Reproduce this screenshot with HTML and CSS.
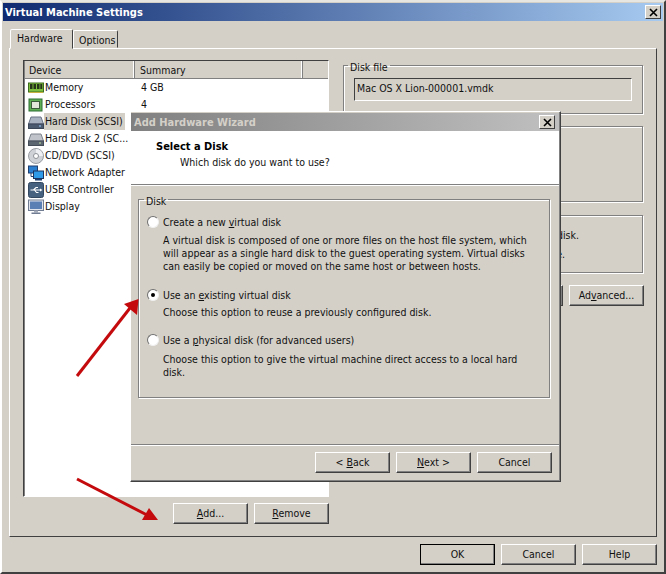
FILE: index.html
```html
<!DOCTYPE html>
<html lang="en">
<head>
<meta charset="utf-8">
<title>Virtual Machine Settings</title>
<link rel="stylesheet" href="styles.css">
</head>
<body>
<div class="window">
  <div class="titlebar main-title">
    <span>Virtual Machine Settings</span>
    <span class="close"><svg width="9" height="9" viewBox="0 0 9 9"><path d="M1 1L8 8M8 1L1 8" stroke="#000" stroke-width="1.6"/></svg></span>
  </div>
  <div class="tabs">
    <div class="tab active">Hardware</div>
    <div class="tab">Options</div>
  </div>
  <div class="panel">
    <div class="left">
      <div class="list">
        <div class="list-head">
          <div class="hcell dev">Device</div>
          <div class="hcell sum">Summary</div>
          <div class="hcell rest"></div>
        </div>
        <div class="row">
          <svg class="ico" viewBox="0 0 16 16"><rect x="0.5" y="3" width="15" height="9" fill="#7fbf3f" stroke="#3d6b1e"/><path d="M2 4h2.5v5H2zM5.5 4H8v5H5.5zM9 4h2.500v5H9zM12.300 4h2v5h-2z" fill="#26331a"/><path d="M1 12h14v1H1z" fill="#c8b040"/></svg>
          <span class="name">Memory</span><span class="val">4 GB</span>
        </div>
        <div class="row">
          <svg class="ico" viewBox="0 0 16 16"><rect x="1" y="2" width="13" height="12" fill="#5fae55" stroke="#2d6e33"/><rect x="3.500" y="4.500" width="8" height="7" fill="#e4e8dc" stroke="#3c5c3c"/></svg>
          <span class="name">Processors</span><span class="val">4</span>
        </div>
        <div class="row">
          <svg class="ico" viewBox="0 0 16 16"><path d="M3 3h10l2.500 7H.5z" fill="#a9b2c0" stroke="#6a7486"/><rect x="0.500" y="10" width="15" height="4.500" fill="#4c5a70" stroke="#3a4558"/><rect x="11" y="11.500" width="2" height="1" fill="#9fd0ff"/></svg>
          <span class="name selected">Hard Disk (SCSI)</span>
        </div>
        <div class="row">
          <svg class="ico" viewBox="0 0 16 16"><path d="M3 3h10l2.500 7H.5z" fill="#c0c4ca" stroke="#7c828c"/><rect x="0.500" y="10" width="15" height="4.500" fill="#5c6670" stroke="#454d58"/><rect x="11" y="11.500" width="2" height="1" fill="#bfe0a0"/></svg>
          <span class="name">Hard Disk 2 (SC...</span>
        </div>
        <div class="row">
          <svg class="ico" viewBox="0 0 16 16"><circle cx="8" cy="8" r="7.500" fill="#cfd2d6" stroke="#9a9da3"/><path d="M8 1a7 7 0 0 1 7 7H8z" fill="#eef0f3"/><circle cx="8" cy="8" r="2.500" fill="#fff" stroke="#8e9298"/></svg>
          <span class="name">CD/DVD (SCSI)</span>
        </div>
        <div class="row">
          <svg class="ico" viewBox="0 0 16 16"><rect x="0.500" y="1" width="9" height="7" fill="#2a7fd0" stroke="#1f3e70"/><path d="M3 8v3.500h3" fill="none" stroke="#1f3e70"/><rect x="5.500" y="6" width="10" height="7.500" fill="#2f9ae8" stroke="#1c3560"/><rect x="7" y="14" width="7" height="1.500" fill="#1f3e70"/></svg>
          <span class="name">Network Adapter</span>
        </div>
        <div class="row">
          <svg class="ico" viewBox="0 0 16 16"><rect x="0.500" y="0.500" width="15" height="15" rx="2" fill="#46617f" stroke="#33475f"/><path d="M2.500 8h10M5.500 8l2.500-2.500h2M6.500 8l2 2.500h2" fill="none" stroke="#fff" stroke-width="1.100"/><path d="M12 6.500l2.500 1.500-2.500 1.500z" fill="#fff"/></svg>
          <span class="name">USB Controller</span>
        </div>
        <div class="row">
          <svg class="ico" viewBox="0 0 16 16"><rect x="0.500" y="1" width="15" height="10.500" fill="#dfe4ec" stroke="#6f7c92"/><rect x="2" y="2.500" width="12" height="7.500" fill="#5a7fb5"/><path d="M6 11.500h4v2H6z" fill="#a6adba"/><path d="M3.500 13.500h9v1.500h-9z" fill="#6f7c92"/></svg>
          <span class="name">Display</span>
        </div>
      </div>
      <div class="btn-row list-btns">
        <div class="btn"><span><u>A</u>dd...</span></div>
        <div class="btn"><span><u>R</u>emove</span></div>
      </div>
    </div>
    <div class="right">
      <fieldset class="group file-group">
        <legend>Disk file</legend>
        <div class="input">Mac OS X Lion-000001.vmdk</div>
      </fieldset>
      <div class="group capacity"></div>
      <div class="group info">
        <p class="info-a">disk.</p>
        <p class="info-b">e.</p>
      </div>
      <div class="btn-row util-btns">
        <div class="btn"></div>
        <div class="btn"><span>Ad<u>v</u>anced...</span></div>
      </div>
    </div>
  </div>
  <div class="btn-row footer">
    <div class="btn default"><span>OK</span></div>
    <div class="btn"><span>Cancel</span></div>
    <div class="btn"><span>Help</span></div>
  </div>

  <div class="dialog">
    <div class="titlebar dlg-title">
      <span>Add Hardware Wizard</span>
      <span class="close"><svg width="9" height="9" viewBox="0 0 9 9"><path d="M1 1L8 8M8 1L1 8" stroke="#000" stroke-width="1.6"/></svg></span>
    </div>
    <div class="dlg-head">
      <div class="dlg-h1">Select a Disk</div>
      <div class="dlg-h2">Which disk do you want to use?</div>
    </div>
    <div class="dlg-main">
      <fieldset class="group disk-group">
        <legend>Disk</legend>
        <div class="opt opt-a">
          <div class="radio"></div>
          <div>
            <div class="opt-label">Create a new <u>v</u>irtual disk</div>
            <p class="opt-desc">A virtual disk is composed of one or more files on the host file system, which<br>will appear as a single hard disk to the guest operating system. Virtual disks<br>can easily be copied or moved on the same host or between hosts.</p>
          </div>
        </div>
        <div class="opt opt-b">
          <div class="radio checked"></div>
          <div>
            <div class="opt-label">Use an <u>e</u>xisting virtual disk</div>
            <p class="opt-desc">Choose this option to reuse a previously configured disk.</p>
          </div>
        </div>
        <div class="opt opt-c">
          <div class="radio"></div>
          <div>
            <div class="opt-label">Use a <u>p</u>hysical disk (for advanced users)</div>
            <p class="opt-desc wide">Choose this option to give the virtual machine direct access to a local hard<br>disk.</p>
          </div>
        </div>
      </fieldset>
    </div>
    <div class="btn-row dlg-foot">
      <div class="btn"><span>&lt; <u>B</u>ack</span></div>
      <div class="btn"><span><u>N</u>ext &gt;</span></div>
      <div class="btn"><span>Cancel</span></div>
    </div>
  </div>

  <svg class="arrows" width="666" height="574" viewBox="0 0 666 574">
    <path d="M77 376L130 308" stroke="#c40a0c" stroke-width="3" fill="none"/>
    <path d="M138.500 299L124 304L137 315z" fill="#c40a0c"/>
    <path d="M77 479L147 515" stroke="#c40a0c" stroke-width="3" fill="none"/>
    <path d="M158 520L142 520L149 508z" fill="#c40a0c"/>
  </svg>
</div>
</body>
</html>
```

FILE: styles.css
```css
* { box-sizing: border-box; }
html, body { margin: 0; padding: 0; }
body {
  width: 666px;
  height: 574px;
  overflow: hidden;
  background: #d4d0c8;
  font-family: "DejaVu Sans", "Liberation Sans", sans-serif;
  font-stretch: condensed;
  font-size: 10.5px;
  line-height: 13px;
  color: #111;
}
u { text-underline-offset: 1px; }
p { margin: 0; }

.window {
  position: relative;
  width: 666px;
  height: 574px;
  padding: 1px 1px 0;
  background: #d4d0c8;
  border-top: 2px solid #e8e6e0;
  border-left: 2px solid #fff;
  border-right: 2px solid #404040;
  border-bottom: 2px solid #404040;
}

.titlebar {
  display: flex;
  align-items: center;
  justify-content: space-between;
  font-size: 11px;
  font-weight: 700;
  white-space: nowrap;
}
.main-title {
  height: 18px;
  padding: 0 2px;
  background: linear-gradient(90deg, #0f2a70 0%, #a6caf0 100%);
  color: #fff;
}
.close {
  display: flex;
  align-items: center;
  justify-content: center;
  width: 16px;
  height: 14px;
  background: #d4d0c8;
  border: 1px solid;
  border-color: #fff #404040 #404040 #fff;
}

.tabs {
  display: flex;
  align-items: flex-end;
  height: 27px;
  padding-left: 7px;
}
.tab {
  width: 45px;
  height: 18px;
  padding: 3px 0 0 5px;
  border: 1px solid #808080;
  border-color: #fff #404040 transparent #fff;
  border-radius: 2px 2px 0 0;
}
.tab.active {
  height: 20px;
  padding: 2px 0 0 6px;
  width: 63px;
  position: relative;
  top: 1px;
  z-index: 1;
  background: #d4d0c8;
}

.panel {
  display: flex;
  gap: 14px;
  width: 648px;
  height: 489px;
  margin-left: 6px;
  padding: 11px 13px 0 13px;
  border: 1px solid;
  border-color: #fff #404040 #404040 #fff;
}

.left { width: 306px; }
.list {
  height: 437px;
  background: #fff;
  border: 1px solid;
  border-color: #404040 #fff #fff #404040;
  box-shadow: inset 1px 1px 0 #808080;
}
.list-head {
  display: flex;
  height: 18px;
  margin: 0 0 0 1px;
  background: #d4d0c8;
}
.hcell {
  padding: 3px 0 0 5px;
  border-right: 1px solid #808080;
  border-bottom: 1px solid #808080;
  box-shadow: inset -1px 0 0 #fff;
}
.dev { width: 110px; padding-left: 4px; }
.sum { width: 168px; }
.rest { flex: 1; border-right: 0; box-shadow: none; }
.row {
  display: flex;
  align-items: center;
  height: 17px;
  padding-left: 4px;
  white-space: nowrap;
}
.ico { width: 16px; height: 16px; flex: none; }
.name {
  width: 96px;
  padding-left: 1px;
  flex: none;
  line-height: 17px;
}
.name.selected { width: 81px; background: #d4d0c8; }
.val { margin-left: 1px; }

.btn-row { display: flex; gap: 6px; }
.list-btns { justify-content: flex-end; margin-top: 6px; }
.btn {
  display: flex;
  align-items: center;
  justify-content: center;
  width: 75px;
  height: 21px;
  background: #d4d0c8;
  border: 1px solid;
  border-color: #fff #404040 #404040 #fff;
  box-shadow: inset -1px -1px 0 #808080;
  white-space: nowrap;
}
.btn.default { outline: 1px solid #000; outline-offset: -1px; }

.right { width: 300px; display: flex; flex-direction: column; }
.group {
  margin: 0;
  padding: 0;
  border: 1px solid #808080;
  box-shadow: 1px 1px 0 #fff, inset 1px 1px 0 #fff;
}
fieldset.group { min-width: 0; }
legend { padding: 4px 2px 0; line-height: 13px; }
.file-group { height: 57px; margin-top: -3px; padding: 0 10px; }
.file-group legend { margin-left: -6px; }
.input {
  height: 23px;
  padding: 3px 0 0 2px;
  margin-top: 4px;
  border: 1px solid;
  border-color: #404040 #fff #fff #404040;
}
.capacity { height: 76px; margin-top: 12px; }
.info {
  height: 58px;
  margin-top: 13px;
  padding: 13px 0 0 0;
  white-space: nowrap;
  display: flex;
  flex-direction: column;
  align-items: flex-end;
  gap: 6px;
}
.info-a { padding-right: 63px; }
.info-b { padding-right: 77px; }
.util-btns { justify-content: flex-end; margin: 12px -1px 0 0; }

.footer { justify-content: flex-end; margin-top: 7px; padding-right: 6px; }

.dialog {
  position: absolute;
  left: 128px;
  top: 109px;
  width: 431px;
  height: 371px;
  padding: 1px 1px 0 0;
  display: flex;
  flex-direction: column;
  background: #d4d0c8;
  border: 1px solid;
  border-color: #fff #404040 #404040 #fff;
  box-shadow: inset -1px -1px 0 #808080;
}
.dlg-title {
  height: 18px;
  padding: 0 4px 0 3px;
  background: linear-gradient(90deg, #808080 0%, #c0c0c0 100%);
  color: #d4d0c8;
}
.dlg-head {
  height: 54px;
  padding: 9px 0 0 25px;
  background: #fff;
  border-bottom: 1px solid #808080;
}
.dlg-h1 { font-size: 11px; font-weight: 700; color: #000; }
.dlg-h2 { margin-top: 3px; padding-left: 24px; }
.dlg-main {
  flex: 1;
  padding: 5px 9px 0 7px;
  border-top: 1px solid #fff;
}
.disk-group { height: 207px; padding: 0 8px; }
.disk-group legend { margin-left: -3px; }
.opt { display: flex; gap: 4px; }
.opt-a { margin-top: 8px; }
.opt-b { margin-top: 16px; }
.opt-c { margin-top: 15px; }
.opt-desc { margin-top: 5px; white-space: nowrap; }
.opt-b .opt-desc { margin-top: 4px; }
.opt-c .opt-desc { margin-top: 6px; }
.radio {
  width: 12px;
  height: 12px;
  flex: none;
  border-radius: 50%;
  background: #fff;
  border: 1px solid;
  border-color: #707070 #f0f0f0 #f0f0f0 #707070;
  box-shadow: 0 0 0 0.5px #d4d0c8;
  position: relative;
}
.radio.checked::after {
  content: "";
  position: absolute;
  left: 3px;
  top: 3px;
  width: 4px;
  height: 4px;
  border-radius: 50%;
  background: #000;
}
.dlg-foot {
  justify-content: flex-end;
  height: 37px;
  padding: 7px 7px 0 0;
  border-top: 1px solid #808080;
  box-shadow: inset 0 1px 0 #fff;
}

.arrows { position: absolute; left: -2px; top: -2px; pointer-events: none; }
```
